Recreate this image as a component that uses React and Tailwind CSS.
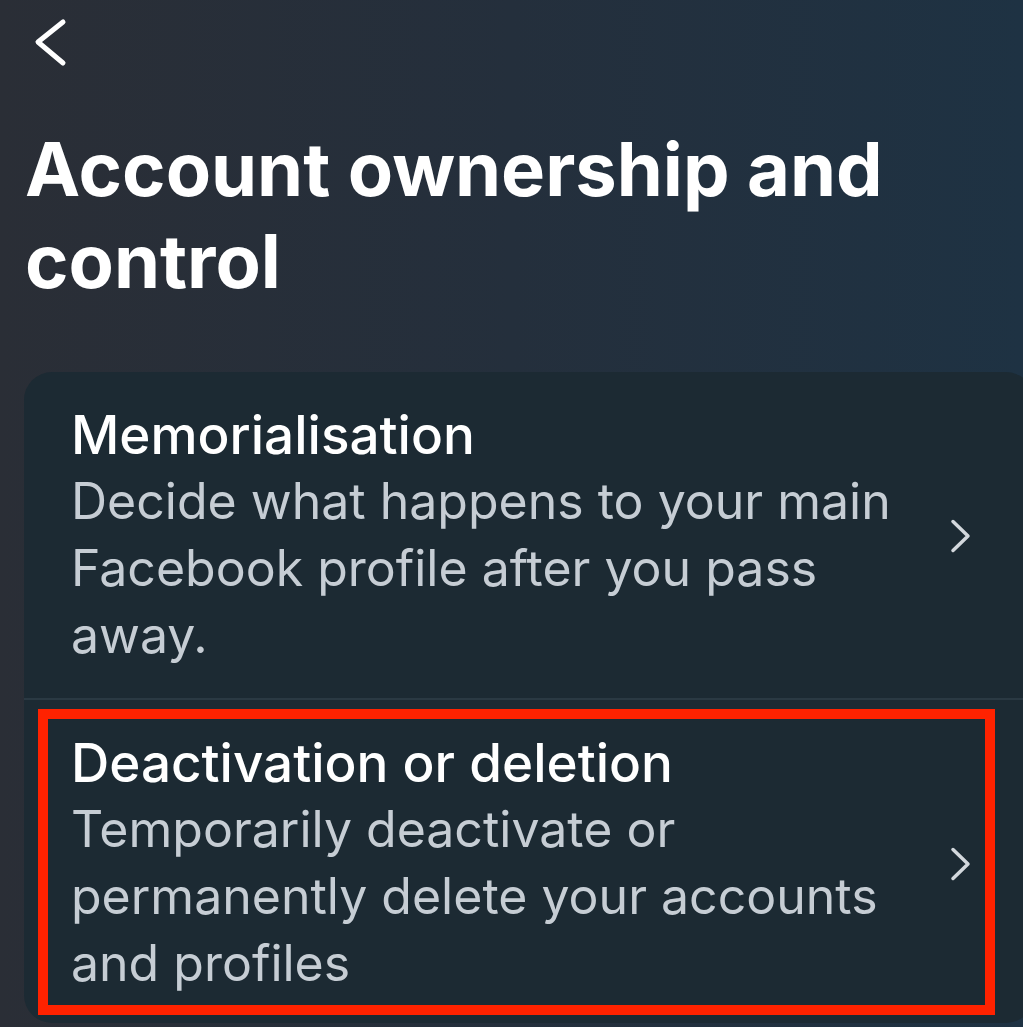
import React from "react";

function ChevronRight() {
  return (
    <svg width="22" height="34" viewBox="0 0 22 34" fill="none" className="shrink-0">
      <polyline points="3,2.5 18,17 3,31.5" stroke="#d3d8dd" strokeWidth="3.5" strokeLinecap="round" strokeLinejoin="round" />
    </svg>
  );
}

function Item({ title, desc, last }) {
  return (
    <div className={"flex items-center pl-[47px] pr-[62px] pt-[30px] " + (last ? "pb-[26px]" : "pb-[29px]")}>
      <div className="flex-1 min-w-0 pr-[22px]">
        <div className="text-[53px] leading-[66px] text-white font-medium">{title}</div>
        <div className="text-[50px] leading-[67px] text-[#c6cdd4]">{desc}</div>
      </div>
      <ChevronRight />
    </div>
  );
}

export default function App() {
  return (
    <div
      className="relative w-[1023px] h-[1027px] overflow-hidden bg-gradient-to-r from-[#2a2e36] via-[#242f3c] to-[#1e3243] flex flex-col"
      style={{ fontFamily: "Inter, 'Noto Sans', sans-serif" }}
    >
      <div className="pl-[34px] pt-[18px] h-[123px] shrink-0">
        <svg width="34" height="50" viewBox="0 0 34 50" fill="none">
          <polyline points="29,4 4,24 29,45" stroke="#ffffff" strokeWidth="5" strokeLinecap="round" strokeLinejoin="round" />
        </svg>
      </div>
      <h1 className="pl-[25px] text-[74px] leading-[92px] font-bold text-white shrink-0">
        Account ownership and control
      </h1>
      <div className="mt-[65px] ml-[24px] w-[1010px] shrink-0 rounded-[28px] bg-[#1c2a33] overflow-hidden">
        <Item
          title="Memorialisation"
          desc="Decide what happens to your main Facebook profile after you pass away."
        />
        <div className="h-[2px] bg-[#2a3943]" />
        <Item
          last
          title="Deactivation or deletion"
          desc="Temporarily deactivate or permanently delete your accounts and profiles"
        />
      </div>
      <div className="absolute left-[38px] top-[709px] w-[957px] h-[306px] border-[10px] border-[#ff2200] pointer-events-none" />
    </div>
  );
}
